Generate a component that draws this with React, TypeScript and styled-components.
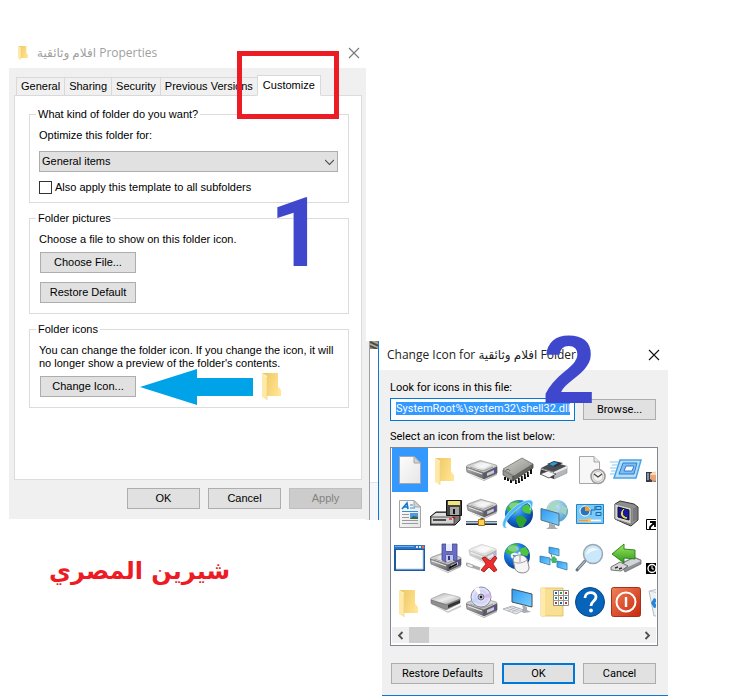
import React, { useLayoutEffect, useRef, useState } from "react";
import styled, { createGlobalStyle, css } from "styled-components";

const sansUi = `"Liberation Sans", "DejaVu Sans", sans-serif`;
const humanistUi = `"Open Sans", "DejaVu Sans", sans-serif`;
const compactUi = `Roboto, "DejaVu Sans", sans-serif`;

const GlobalStyle = createGlobalStyle`
  * { box-sizing: border-box; }
  body { margin: 0; background: #fff; color: #000; }
  button, input, select { font: inherit; color: inherit; margin: 0; }
  svg { display: block; }
`;

/* ---------- desktop ---------- */

const Desktop = styled.main`
  display: grid;
  grid-template-columns: minmax(0, 357fr) 16px minmax(0, 286fr);
  align-items: start;
  min-height: 100vh;
  padding: 38px 72px 0 9px;
`;

const LeftColumn = styled.div`
  display: flex;
  flex-direction: column;
`;

const Window = styled.section`
  position: relative;
`;

const PropertiesWindow = styled(Window)`
  font: 11px/13px ${sansUi};
`;

const IconWindow = styled(Window)`
  margin-top: 301px;
  border-bottom: 1px solid #0a78d4;
  font: 11px/13px ${compactUi};
`;

const TitleBar = styled.header<{ $inactive?: boolean }>`
  display: flex;
  align-items: center;
  height: ${(p) => (p.$inactive ? 30 : 31)}px;
  padding: ${(p) => (p.$inactive ? "0 6px 0 9px" : "0 8px 0 5px")};
  gap: 9px;
  background: #fff;
  color: ${(p) => (p.$inactive ? "#a0a0a0" : "#222")};
  font: 12px/18px ${humanistUi};
`;

const Title = styled.h1`
  flex: 1;
  margin: 0;
  font: inherit;
  white-space: nowrap;
`;

const CloseButton = styled.button`
  display: grid;
  place-items: center;
  width: 12px;
  height: 12px;
  padding: 0;
  border: 0;
  background: none;
`;

const Body = styled.div`
  padding: 7px 4px 10px 5px;
  background: #f0f0f0;
`;

/* ---------- tabs ---------- */

const TabList = styled.div`
  display: flex;
  align-items: flex-end;
  height: 21px;
  padding-left: 2px;
  margin-bottom: -1px;
  position: relative;
`;

const Tab = styled.button<{ $active?: boolean }>`
  position: relative;
  height: 19px;
  padding: 0 4px;
  border: 1px solid #d9d9d9;
  border-right-width: 0;
  background: #f0f0f0;
  white-space: nowrap;
  ${(p) =>
    p.$active &&
    css`
      height: 21px;
      padding: 0 5px 1px;
      border-right-width: 1px;
      border-bottom-color: #fff;
      background: #fff;
    `}
`;

const TabPage = styled.div`
  display: flex;
  flex-direction: column;
  gap: 9px;
  min-height: 385px;
  padding: 12px 12px 0 14px;
  border: 1px solid #dcdcdc;
  background: #fff;
`;

const Group = styled.fieldset<{ $end: number }>`
  position: relative;
  min-width: 0;
  margin: 0;
  padding: 8px 10px ${(p) => p.$end}px 9px;
  border: 1px solid #dcdcdc;
`;

const Legend = styled.legend`
  margin-left: -3px;
  padding: 0 2px;
`;

const Stack = styled.div<{ $gap: number }>`
  display: flex;
  flex-direction: column;
  align-items: flex-start;
  gap: ${(p) => p.$gap}px;
`;

const Copy = styled.p`
  margin: 0;
  white-space: nowrap;
`;

const SelectBox = styled.div`
  position: relative;
  width: 100%;
  svg {
    position: absolute;
    right: 4px;
    top: 7px;
    pointer-events: none;
  }
`;

const Select = styled.select`
  display: block;
  appearance: none;
  width: 100%;
  height: 21px;
  padding: 0 2px;
  border: 1px solid #adadad;
  border-radius: 0;
  background: #e1e1e1;
`;

const CheckLabel = styled.label`
  display: flex;
  align-items: center;
  gap: 3px;
`;

const CheckBox = styled.input`
  appearance: none;
  width: 13px;
  height: 13px;
  border: 1px solid #333;
  background: #fff;
  &:checked {
    box-shadow: inset 0 0 0 2px #fff;
    background: #333;
  }
`;

const PushButton = styled.button<{ $width: number; $primary?: boolean }>`
  width: ${(p) => p.$width}px;
  height: 21px;
  padding: 0;
  border: ${(p) => (p.$primary ? "2px solid #0078d7" : "1px solid #adadad")};
  background: #e1e1e1;
  white-space: nowrap;
  &:disabled {
    border-color: #bfbfbf;
    background: #ccc;
    color: #838383;
  }
`;

const PreviewRow = styled.div`
  display: flex;
  align-items: center;
  gap: 4px;
  height: 21px;
  padding-left: 1px;
`;

const ButtonStack = styled(Stack)`
  padding-left: 1px;
`;

const FolderPreview = styled.span`
  margin-left: 5px;
`;

const Footer = styled.footer`
  display: flex;
  justify-content: flex-end;
  gap: 8px;
  padding-top: 8px;
`;

/* ---------- annotations ---------- */

const TabHighlight = styled.span`
  position: absolute;
  top: -25px;
  left: -21px;
  width: 102px;
  height: 68px;
  border: 5px solid #ed1c24;
  pointer-events: none;
  z-index: 2;
`;

const StepNumber = styled.strong<{ $top: number; $left: string; $face: string }>`
  position: absolute;
  top: ${(p) => p.$top}px;
  left: ${(p) => p.$left};
  color: #3f48cc;
  font: bold 96px/96px ${(p) => p.$face};
  pointer-events: none;
  z-index: 3;
`;

const Signature = styled.p`
  margin: 32px 0 0 40px;
  color: #ed1c24;
  font: bold 24px/40px "DejaVu Sans", sans-serif;
  text-align: left;
  white-space: nowrap;
`;

/* ---------- sliver of the window behind ---------- */

const BackSliver = styled.div`
  display: flex;
  height: 179px;
  margin-top: 303px;
`;

const SliverEdge = styled.div`
  width: 4px;
  border-right: 1px solid #a0a0a0;
  background: #f0f0f0;
`;

const SliverContent = styled.div`
  display: flex;
  flex-direction: column;
  flex: 1;
  min-width: 0;
  overflow: hidden;
`;

const SliverBlank = styled.div`
  flex: 1;
  background: #fff;
`;

const SliverStatus = styled.div`
  height: 38px;
  border-top: 1px solid #dfe3ea;
  background: #f5f7fa;
`;

const SliverFrame = styled.div`
  width: 4px;
  padding-top: 29px;
  border-left: 1px solid #0a78d4;
  background: #f0f0f0;
  background-clip: content-box;
`;

/* ---------- change icon window ---------- */

const IconBody = styled.div`
  display: flex;
  flex-direction: column;
  padding: 11px 10px 11px 8px;
  background: #f0f0f0;
`;

const FieldLabel = styled.label`
  padding-bottom: 4px;
`;

const ListLabel = styled.h2`
  margin: 0;
  padding: 9px 0 4px;
  font: inherit;
`;

const PathRow = styled.div`
  display: flex;
  align-items: center;
  gap: 8px;
  padding-right: 2px;
`;

const PathFrame = styled.div`
  display: flex;
  flex: 1;
  align-items: flex-start;
  min-width: 0;
  height: 23px;
  padding: 3px 4px 0 5px;
  border: 1px solid #0078d7;
  background: #fff;
`;

const PathInput = styled.input`
  width: 100%;
  min-width: 0;
  height: 13px;
  padding: 0;
  border: 0;
  outline: 0;
  background: #3399ff;
  color: #fff;
`;

const IconList = styled.div`
  padding: 0 1px 2px;
  border: 1px solid #828790;
  background: #fff;
`;

const IconGrid = styled.div`
  display: grid;
  grid-template-columns: repeat(8, 36px);
  grid-auto-rows: 44px;
  overflow: hidden;
`;

const IconCell = styled.button<{ $selected: boolean }>`
  display: grid;
  place-items: center;
  padding: 0;
  border: 0;
  background: ${(p) => (p.$selected ? "#3399ff" : "transparent")};
`;

const ScrollTrack = styled.div`
  display: flex;
  height: 16px;
  margin-top: 3px;
  background: #f0f0f0;
`;

const ScrollArrow = styled.button`
  display: grid;
  place-items: center;
  width: 17px;
  padding: 0;
  border: 0;
  background: none;
`;

const ScrollThumb = styled.div`
  width: 20px;
  background: #cdcdcd;
`;

const ScrollSpace = styled.div`
  flex: 1;
`;

const IconFooter = styled.footer`
  display: flex;
  gap: 8px;
  padding: 17px 2px 0 1px;
`;

const FooterSpace = styled.span`
  flex: 1;
  margin-right: -8px;
`;

/* ---------- drawings ---------- */

const Cross = ({ color }: { color: string }) => (
  <svg width="12" height="12" viewBox="0 0 12 12" aria-hidden="true">
    <path d="M1 1l10 10M11 1L1 11" stroke={color} strokeWidth="1.1" />
  </svg>
);

const FolderShape = () => (
  <>
    <path d="M0 0H16V14L18 16V23H5V3Z" fill="url(#folderBack)" />
    <path d="M16 14l3 3v6h-3z" fill="#ffe596" />
    <path d="M0 0l5 4v23L0 24z" fill="#ffe9a8" />
    <path d="M5 4v23" stroke="#f1d27c" strokeWidth=".7" />
  </>
);

const Folder = ({ width, height }: { width: number; height: number }) => (
  <svg width={width} height={height} viewBox="0 0 19 27" preserveAspectRatio="none" aria-hidden="true">
    <FolderShape />
  </svg>
);

const Defs = () => (
  <svg width="0" height="0" aria-hidden="true">
    <defs>
      <linearGradient id="folderBack" x1="0" x2="1" y1="0" y2=".4">
        <stop offset="0" stopColor="#eac561" />
        <stop offset="1" stopColor="#ffe08a" />
      </linearGradient>
      <linearGradient id="paper" x1="0" x2="1" y1="0" y2="1">
        <stop offset="0" stopColor="#fdfdfd" />
        <stop offset="1" stopColor="#e6e6e8" />
      </linearGradient>
      <linearGradient id="metalTop" x1="0" x2="1" y1="0" y2="1">
        <stop offset="0" stopColor="#a9a9a9" />
        <stop offset=".5" stopColor="#ededed" />
        <stop offset="1" stopColor="#9a9a9a" />
      </linearGradient>
      <linearGradient id="metalSide" x1="0" x2="1" y1="0" y2="1">
        <stop offset="0" stopColor="#b4b4b4" />
        <stop offset="1" stopColor="#66666c" />
      </linearGradient>
      <linearGradient id="chipTop" x1="0" x2="1" y1="0" y2="1">
        <stop offset="0" stopColor="#d4d5d0" />
        <stop offset="1" stopColor="#85867f" />
      </linearGradient>
      <radialGradient id="ocean" cx=".38" cy=".3" r=".75">
        <stop offset="0" stopColor="#6cc4ff" />
        <stop offset=".5" stopColor="#1673d8" />
        <stop offset="1" stopColor="#063587" />
      </radialGradient>
      <radialGradient id="paleOcean" cx=".35" cy=".3" r=".8">
        <stop offset="0" stopColor="#d6efff" />
        <stop offset="1" stopColor="#4a9cc9" />
      </radialGradient>
      <linearGradient id="screen" x1="0" x2="1" y1="0" y2="1">
        <stop offset="0" stopColor="#2a9af0" />
        <stop offset="1" stopColor="#7fd0ff" />
      </linearGradient>
      <linearGradient id="greenArrow" x1="0" x2="0" y1="0" y2="1">
        <stop offset="0" stopColor="#a0e860" />
        <stop offset="1" stopColor="#2c9a1c" />
      </linearGradient>
      <linearGradient id="power" x1="0" x2="1" y1="0" y2="1">
        <stop offset="0" stopColor="#f08058" />
        <stop offset="1" stopColor="#c8280c" />
      </linearGradient>
      <radialGradient id="disc">
        <stop offset="0" stopColor="#fff" />
        <stop offset=".6" stopColor="#cfd0f4" />
        <stop offset="1" stopColor="#eef" />
      </radialGradient>
    </defs>
  </svg>
);

const DriveShape = () => (
  <>
    <path d="M2 19l16 7 13-6v-2L18 25z" fill="#000" opacity=".3" />
    <path d="M0 12q0-1 2-2l11-4q1-1 3 0l14 4q1 0 1 2l-13 6z" fill="url(#metalTop)" stroke="#808080" strokeWidth=".6" />
    <path d="M0 12l18 6v6L1 17z" fill="url(#metalSide)" stroke="#666" strokeWidth=".6" />
    <path d="M18 18l13-6v6l-13 6z" fill="#5f5f68" stroke="#44444c" strokeWidth=".6" />
    <path d="M2 14l14 5" stroke="#ececec" strokeWidth="1" />
    <path d="M21 18l7-3v3l-7 3z" fill="#c9c9d6" />
    <path d="M28 15l2-1v3l-2 1z" fill="#5b4bc0" />
    <path d="M7 10l8-3 10 3-7 4z" fill="#fff" opacity=".55" />
    <path d="M4 12l13 4 10-4" stroke="#8f8f8f" strokeWidth=".8" fill="none" />
  </>
);

const GlobeShape = ({ cx = 16, cy = 16, r = 14 }: { cx?: number; cy?: number; r?: number }) => (
  <g transform={`translate(${cx} ${cy}) scale(${r / 14})`}>
    <circle r="14" fill="url(#ocean)" />
    <path d="M-9-10c4-4 9-3 10-2l-3 3 3 3-4 2-1 4-3-2-3 0-3-3z" fill="#3db83a" />
    <path d="M4-8l5-2 4 6-2 4-5-1-3-3z" fill="#4cc63c" />
    <path d="M-2 2l6 0 4 4-4 7-4 0-3-6z" fill="#2fa32f" />
    <ellipse cx="-4" cy="-8" rx="6" ry="3.5" fill="#fff" opacity=".35" />
  </g>
);

const PageShape = () => (
  <>
    <path d="M5.500 2.500H20L26.500 9V29.500H5.500Z" fill="url(#paper)" stroke="#a6a6a6" />
    <path d="M20 2.500V9h6.500z" fill="#d2d2d2" stroke="#a6a6a6" />
  </>
);

type Drawing = { label: string; art: React.ReactNode };

const drawings: Drawing[] = [
  { label: "Document", art: <PageShape /> },
  {
    label: "Folder",
    art: (
      <g transform="translate(5 4)">
        <FolderShape />
      </g>
    ),
  },
  {
    label: "Hard drive",
    art: (
      <g transform="translate(0 1)">
        <DriveShape />
      </g>
    ),
  },
  {
    label: "Memory chip",
    art: (
      <>
        <path d="M3 23v3M6 24v3M9 26v3M14 26v4M17 24v5M20 22v5M23 20v5M26 18v5M29 15v5" stroke="#111" strokeWidth="2" />
        <path d="M1 16l10 6v5L1 21z" fill="#94958f" stroke="#555" strokeWidth=".7" />
        <path d="M11 22L31 10v4L11 27z" fill="#63645e" stroke="#333" strokeWidth=".7" />
        <path d="M1 15L20 4l11 6-19 12z" fill="url(#chipTop)" stroke="#666" strokeWidth=".7" />
        <path d="M4 16q3-2 4 1" fill="none" stroke="#666" />
        <path d="M15 25v4M18 23v4M21 21v4M24 19v4M27 17v4" stroke="#ddd" strokeWidth=".7" />
      </>
    ),
  },
  {
    label: "Printer",
    art: (
      <>
        <path d="M3 14l12-6 14 4-13 6z" fill="#4a4e52" />
        <path d="M16 18l13-6v7l-13 6z" fill="#b4b8bb" stroke="#777" strokeWidth=".5" />
        <path d="M3 14l13 4v7L2 20z" fill="#3b3e42" />
        <path d="M16 18l13-6v2l-13 6z" fill="#ebeced" />
        <path d="M9 10l7-3 9 2-8 4z" fill="#2f3235" />
        <path d="M11 10l5-2 4 1-5 3z" fill="#2d9be4" />
        <path d="M2 20l8-3 8 3-7 4z" fill="#f7f7f7" stroke="#444" strokeWidth=".8" />
        <path d="M3 15l13 4 13-5" stroke="#e6e6e6" strokeWidth=".8" fill="none" />
      </>
    ),
  },
  {
    label: "Recent document",
    art: (
      <>
        <path d="M5.500 2.500H20L25.500 8V29.500H5.500Z" fill="#f7f7f7" stroke="#a8a8a8" />
        <path d="M20 2.500V8h5.500" fill="#e4e4e4" stroke="#a8a8a8" />
        <circle cx="24" cy="22.500" r="7" fill="#f4f2ee" stroke="#9a9a9a" strokeWidth="1.600" />
        <circle cx="24" cy="22.500" r="5" fill="none" stroke="#b5b5b5" strokeWidth=".8" />
        <path d="M20 20l4 3 4-3" fill="none" stroke="#444" strokeWidth="1.200" />
      </>
    ),
  },
  {
    label: "Run",
    art: (
      <>
        <path d="M10 6h21l-5 18H4z" fill="#b9def8" stroke="#4aa3e6" strokeWidth="1.500" />
        <path d="M13 9h14l-3 11H9z" fill="#7dbdf0" stroke="#2c7fd0" />
        <path d="M16 12h8l-2 5h-8z" fill="#f4fbff" stroke="#3c79cc" />
        <path d="M0 8h9M2 11h6M0 14h7M1 17h5M0 20h5" stroke="#8ccaf4" strokeWidth="1.200" />
      </>
    ),
  },
  {
    label: "Shared overlay",
    art: (
      <>
        <path d="M0 18h6v10H0z" fill="#333b4c" />
        <path d="M1 19h2v7H1z" fill="#8992a5" />
        <path d="M4 20c4-3 6-2 10-2v8c-4 1-7 1-10-1z" fill="#e7a77a" />
        <path d="M4 20c3-2 6-2 10-2v3H5z" fill="#fad9bd" />
        <path d="M4 26c4 2 6 1 10 1" stroke="#74401f" fill="none" />
      </>
    ),
  },
  {
    label: "Text document",
    art: (
      <>
        <PageShape />
        <path d="M8 11l5-6 1 6M10 9h4" stroke="#1576cc" strokeWidth="1.600" fill="none" />
        <path d="M16 7h3M16 10h5M8 13.500h16" stroke="#2a8fdc" strokeWidth="1" />
        <path d="M8 16.500h7M8 19.500h7M8 22.500h16M8 25.500h16" stroke="#999" strokeWidth="1" />
        <path d="M16 15h8v6h-8z" fill="#4e9be0" />
        <path d="M16 21l3-3 5 1v2z" fill="#356a50" />
      </>
    ),
  },
  {
    label: "Floppy drive",
    art: (
      <>
        <path d="M0 19l6-5h24v8l-5 5H0z" fill="#777" stroke="#111" />
        <path d="M1 19l5-4h20l-3 4z" fill="#dedede" />
        <path d="M1 19h23v7H1z" fill="#d2d2d2" stroke="#333" strokeWidth=".8" />
        <path d="M3 22h13" stroke="#222" strokeWidth="1.500" />
        <path d="M19 21h3" stroke="#e03030" strokeWidth="1.500" />
        <path d="M16.500 2.500h15v15h-15z" fill="#444" stroke="#111" />
        <path d="M18 3h12v4H18z" fill="#f2e37a" />
        <path d="M20 9h9v8h-9z" fill="#a6a6a6" />
        <path d="M24 11v5" stroke="#111" strokeWidth="2" />
        <path d="M22 19h3v2" stroke="#d33" />
      </>
    ),
  },
  {
    label: "Network drive",
    art: (
      <>
        <g transform="translate(1 -4) scale(.96 .96)">
          <DriveShape />
        </g>
        <path d="M16 20v5" stroke="#555" strokeWidth="3" />
        <path d="M0 25h31" stroke="#223" strokeWidth="4" />
        <path d="M0 24.500h31" stroke="#a9c8dc" strokeWidth="2" />
        <path d="M12.500 21.500h6v6h-6z" fill="#ffd25c" stroke="#b37400" />
      </>
    ),
  },
  {
    label: "Internet",
    art: (
      <>
        <GlobeShape cx={17} cy={16} r={14} />
        <path d="M5 30C-2 31 0 21 8 13S27 0 30 3c2 2 0 6-2 9 1-4 1-6-1-7-3-1-10 4-16 10S1 28 5 30z" fill="#4db8f4" stroke="#c6ecff" strokeWidth=".6" />
      </>
    ),
  },
  {
    label: "Network computer",
    art: (
      <>
        <circle cx="19" cy="13" r="11" fill="url(#paleOcean)" />
        <path d="M12 6c4-4 8-3 10-2l-4 4 2 4-6 2-4-3zM24 7l5 3-1 7-5-3z" fill="#a5d6bd" opacity=".9" />
        <path d="M3 10.500l18 5v12L3 22z" fill="url(#screen)" stroke="#56717f" />
        <path d="M11 25l6 2v2l3 2H8l3-2z" fill="#a4abb1" />
      </>
    ),
  },
  {
    label: "Control panel",
    art: (
      <>
        <path d="M2.500 6.500h27v19h-27z" fill="#7cc8f6" stroke="#2187c9" />
        <circle cx="11" cy="13" r="5" fill="#2574bd" stroke="#fff" />
        <path d="M11 13V8a5 5 0 015 5z" fill="#f39b2c" />
        <path d="M17 17v-5h4v-4M22 8.500h5v3h-5zM22 14.500h5v3h-5z" fill="none" stroke="#136bab" />
        <path d="M5 22.500h22" stroke="#fff" strokeWidth="1.800" />
        <path d="M5 22.500h9" stroke="#f39b2c" strokeWidth="1.800" />
        <path d="M14 20.500h3v4h-3z" fill="#ffc25e" />
      </>
    ),
  },
  {
    label: "Screen saver",
    art: (
      <>
        <path d="M5 6l5-3 14 3 4 3v13l-7 6-5-2L5 21z" fill="#8f8f8f" stroke="#333" />
        <path d="M5 6l16 4v16L5 21z" fill="#d7d7d7" stroke="#777" strokeWidth=".7" />
        <path d="M8 9l11 3v10L8 19z" fill="#1418a4" stroke="#111" />
        <path d="M14 11c-3 3-2 8 3 9-5 1-8-5-3-9z" fill="#ffe930" stroke="#ffe930" />
        <path d="M24 10v13M26 9v13" stroke="#666" />
      </>
    ),
  },
  {
    label: "Shortcut overlay",
    art: (
      <>
        <path d="M.5 21.500h12v10H.5z" fill="#fff" stroke="#000" />
        <path d="M4 24h5v5M9 24l-5 5v2" fill="none" stroke="#000" strokeWidth="1.800" />
      </>
    ),
  },
  {
    label: "Program window",
    art: (
      <>
        <path d="M0 3h31v26H0z" fill="#1c5a9e" />
        <path d="M0 3h31v4H0z" fill="#2a73c8" />
        <path d="M2 8h27v19H2z" fill="#fff" />
        <path d="M1 4.500h19" stroke="#6faced" strokeWidth="1" />
        <path d="M22 5h2M25 5h2" stroke="#d6e8fb" strokeWidth="2" />
        <path d="M28 5h2" stroke="#f26a3c" strokeWidth="2.500" />
        <path d="M29 8v19H2" stroke="#b5d4f0" fill="none" />
      </>
    ),
  },
  {
    label: "Save to drive",
    art: (
      <>
        <g transform="translate(0 5)">
          <DriveShape />
        </g>
        <path d="M12 2h4v7h6V2h5v17l-4-1v-5h-7v7l-4-2z" fill="#6a6dc4" stroke="#45488f" strokeWidth=".8" />
        <path d="M16 2h6v7h-6z" fill="#e9ebff" />
        <path d="M16 13h7v6h-7z" fill="#bfc3ef" />
        <path d="M18 14h2v4h-2z" fill="#34367c" />
        <path d="M19 25l8-4v2l-8 4z" fill="#111" />
      </>
    ),
  },
  {
    label: "Disconnected network drive",
    art: (
      <>
        <g transform="translate(3 -3) scale(.88 .96)" opacity=".45">
          <DriveShape />
        </g>
        <path d="M0 22l14 5" stroke="#aaa" strokeWidth="3" />
        <path d="M1 21l6 2v3l-6-2z" fill="#eee" stroke="#999" strokeWidth=".7" />
        <path d="M16 16l3-1 5 4 5-5 2 2-4 6 4 6-3 2-5-5-5 5-3-2 5-6z" fill="#ee2e2e" stroke="#9c1414" strokeWidth=".8" />
      </>
    ),
  },
  {
    label: "Internet mouse",
    art: (
      <>
        <GlobeShape cx={15} cy={14} r={13} />
        <path d="M14 16c-6 0-5-5-1-4s6 1 4-2" stroke="#f8f8f8" strokeWidth="2" fill="none" />
        <path d="M11 18c0-6 11-7 14-1l2 8c1 7-11 8-14 2z" fill="#f5f5f5" stroke="#8a8a8a" />
        <path d="M12 20c4 2 9 1 13-2M18 14v6" stroke="#9f9f9f" fill="none" />
      </>
    ),
  },
  {
    label: "Network",
    art: (
      <>
        <path d="M12 9l3 9M6 17l9 1 9 4" stroke="#777" strokeWidth="1" fill="none" />
        <path d="M13 17l3-3 3 3-1 4h-4z" fill="#3fb867" />
        <g fill="url(#screen)" stroke="#317ca8" strokeWidth=".8">
          <path d="M11 5l10 2v7l-10-3z" />
          <path d="M2 14l10 2v7L2 20z" />
          <path d="M19 19l10 2v7l-10-3z" />
        </g>
      </>
    ),
  },
  {
    label: "Search",
    art: (
      <>
        <path d="M11 19L3 28" stroke="#65727c" strokeWidth="3" strokeLinecap="round" />
        <path d="M11 19l-7 8" stroke="#b1bac2" strokeWidth="1.200" />
        <circle cx="19" cy="12" r="9.500" fill="#c9e8fb" stroke="#9ca7b0" strokeWidth="1.500" />
        <path d="M12 13c1-7 7-9 13-5-5 0-10 2-13 5z" fill="#fff" opacity=".75" />
      </>
    ),
  },
  {
    label: "Eject device",
    art: (
      <>
        <path d="M10 22l14-7 7 3v4l-16 8z" fill="#8d9298" stroke="#555" strokeWidth=".6" />
        <path d="M12 22l12-6 7 3-13 6z" fill="#d3d6d8" />
        <path d="M1 25l9-5 8 4-7 5-10-1z" fill="#d8d8d8" stroke="#555" strokeWidth=".8" />
        <path d="M5 26l3-1M9 27l3-1" stroke="#333" strokeWidth="1.500" />
        <path d="M2 12L14 2v5l11 1v9l-11-1v5z" fill="url(#greenArrow)" stroke="#2b7a1a" strokeWidth=".9" />
      </>
    ),
  },
  {
    label: "Offline overlay",
    art: (
      <>
        <path d="M0 21h13v11H0z" fill="#000" />
        <circle cx="6" cy="26.500" r="4" fill="none" stroke="#fff" strokeWidth="1.400" />
        <path d="M6 24v3h2" stroke="#fff" fill="none" />
      </>
    ),
  },
  {
    label: "Open folder",
    art: (
      <g transform="translate(5 4)">
        <FolderShape />
      </g>
    ),
  },
  {
    label: "Removable drive",
    art: (
      <>
        <path d="M4 20l14 5 13-6v2l-13 6z" fill="#000" opacity=".2" />
        <path d="M1 14q-1-1 2-2l9-4q2-1 5 0l12 3q3 1 0 3l-11 4q-2 1-4 0z" fill="url(#metalTop)" stroke="#999" strokeWidth=".6" />
        <path d="M1 14l13 4q2 1 4 0l12-5v4l-12 6q-2 1-4 0L2 18q-1 0-1-2z" fill="#8f8f8f" stroke="#666" strokeWidth=".6" />
        <path d="M18 19l12-5v3l-12 5z" fill="#333" />
      </>
    ),
  },
  {
    label: "Optical drive",
    art: (
      <>
        <g transform="translate(0 6)">
          <DriveShape />
        </g>
        <circle cx="15" cy="11" r="10" fill="url(#disc)" stroke="#8a8a9c" />
        <path d="M15 11L8 3a10 10 0 015-2z" fill="#fff" />
        <path d="M15 11l9-4a10 10 0 011 5z" fill="#d5b8f2" />
        <path d="M15 11l-7 7a10 10 0 01-2-5z" fill="#bfd9fa" />
        <circle cx="15" cy="11" r="3" fill="#b9b9ce" stroke="#76768e" />
        <circle cx="15" cy="11" r="1.200" fill="#111" />
      </>
    ),
  },
  {
    label: "Computer",
    art: (
      <>
        <path d="M10 3l20 5v13l-20-5z" fill="url(#screen)" stroke="#444f58" />
        <path d="M20 19l5 2v3l4 2-7 1-4-2 3-2z" fill="#a7adb2" />
        <path d="M1 23l9-3 12 4-8 4z" fill="#eceef0" stroke="#939ba2" strokeWidth=".7" />
        <path d="M4 22l12 4M7 21l12 4M6 25l8-4M10 26l8-4" stroke="#aab0b6" strokeWidth=".7" />
      </>
    ),
  },
  {
    label: "Program group",
    art: (
      <>
        <path d="M3 2h22v28H3z" fill="#f8df92" stroke="#e0bb55" strokeWidth=".8" />
        <path d="M3 2h4v28H3z" fill="#ffe9ad" />
        <path d="M15.500 4.500h15v15h-15z" fill="#fff" stroke="#8c8c8c" />
        <path d="M20.500 4.500v15M25.500 4.500v15M15.500 9.500h15M15.500 14.500h15" stroke="#999" />
        <path d="M17 6h2v2h-2zM27 11h2v2h-2zM22 16h2v2h-2z" fill="#245ea8" />
        <path d="M22 6h2v2h-2zM17 11h2v2h-2z" fill="#319447" />
        <path d="M27 6h2v2h-2zM22 11h2v2h-2zM17 16h2v2h-2zM27 16h2v2h-2z" fill="#b23c2c" />
      </>
    ),
  },
  {
    label: "Help",
    art: (
      <>
        <circle cx="16" cy="16" r="14.500" fill="#0764b8" stroke="#05488a" />
        <path d="M11 12c0-7 11-7 11-1 0 4-5 4-5 9" fill="none" stroke="#fff" strokeWidth="2.800" />
        <circle cx="17" cy="24.500" r="1.900" fill="#fff" />
      </>
    ),
  },
  {
    label: "Shut down",
    art: (
      <>
        <rect x="1.500" y="1.500" width="29" height="29" rx="2" fill="url(#power)" stroke="#a5321c" />
        <circle cx="16" cy="16" r="9.500" fill="none" stroke="#fff" strokeWidth="2" />
        <path d="M16 11v10" stroke="#fff" strokeWidth="2.400" />
      </>
    ),
  },
  {
    label: "Recycle bin",
    art: (
      <>
        <path d="M3 5l14-3 12 3-3 24-18 1z" fill="#eef2f5" stroke="#b4bec6" />
        <path d="M3 5l14 3 12-3" fill="none" stroke="#c5cdd3" />
        <path d="M8 12l4 2-3 3 3 4-4 1-3-5z" fill="#2486d9" />
      </>
    ),
  },
];

const IconArt = ({ children }: { children: React.ReactNode }) => (
  <svg width="32" height="32" viewBox="0 0 32 32" aria-hidden="true">
    {children}
  </svg>
);

const CalloutArrow = () => (
  <svg width="113" height="36" viewBox="0 0 113 36" aria-hidden="true">
    <path d="M0 18L57 0V9H113V27H57V36Z" fill="#00a2e8" />
  </svg>
);

const Chevron = ({ d, size, width }: { d: string; size: number; width: number }) => (
  <svg width={size} height={size} viewBox="0 0 9 9" aria-hidden="true">
    <path d={d} fill="none" stroke="#505050" strokeWidth={width} />
  </svg>
);

const SliverPhoto = () => (
  <svg width="9" height="8" viewBox="0 0 9 8" aria-hidden="true">
    <path d="M0 0h9v8H0z" fill="#8d8578" />
    <path d="M0 1l9 4M0 5l7 3" stroke="#4a453e" strokeWidth="1.500" />
    <path d="M3 0l6 3M0 3l9 4" stroke="#bdb5a6" />
  </svg>
);

/* ---------- page ---------- */

const tabs = ["General", "Sharing", "Security", "Previous Versions", "Customize"];

export default function App() {
  const pathRef = useRef<HTMLInputElement>(null);
  const [path, setPath] = useState("%SystemRoot%\\system32\\shell32.dll");
  const [tab, setTab] = useState("Customize");
  const [selected, setSelected] = useState("Document");

  useLayoutEffect(() => {
    const field = pathRef.current;
    if (field) field.scrollLeft = field.scrollWidth;
  }, []);

  return (
    <>
      <GlobalStyle />
      <Desktop>
        <LeftColumn>
          <PropertiesWindow aria-label="Properties">
            <TitleBar $inactive>
              <Folder width={10} height={14} />
              <Title>افلام وثائقية Properties</Title>
              <CloseButton aria-label="Close">
                <Cross color="#777" />
              </CloseButton>
            </TitleBar>
            <Body>
              <TabList role="tablist">
                {tabs.map((name) => (
                  <Tab key={name} role="tab" aria-selected={tab === name} $active={tab === name} onClick={() => setTab(name)}>
                    {name}
                    {name === "Customize" && <TabHighlight />}
                  </Tab>
                ))}
              </TabList>
              <TabPage role="tabpanel">
                <Group $end={8}>
                  <Legend>What kind of folder do you want?</Legend>
                  <Stack $gap={9}>
                    <label htmlFor="template">Optimize this folder for:</label>
                    <SelectBox>
                      <Select id="template" defaultValue="General items">
                        <option>General items</option>
                      </Select>
                      <Chevron d="M0 2l4.500 4.500L9 2" size={9} width={1.1} />
                    </SelectBox>
                    <CheckLabel>
                      <CheckBox type="checkbox" />
                      Also apply this template to all subfolders
                    </CheckLabel>
                  </Stack>
                </Group>
                <Group $end={10}>
                  <Legend>Folder pictures</Legend>
                  <Stack $gap={6}>
                    <Copy>Choose a file to show on this folder icon.</Copy>
                    <ButtonStack $gap={9}>
                      <PushButton $width={96}>Choose File...</PushButton>
                      <PushButton $width={96}>Restore Default</PushButton>
                    </ButtonStack>
                  </Stack>
                </Group>
                <Group $end={10}>
                  <Legend>Folder icons</Legend>
                  <Stack $gap={6}>
                    <Copy>
                      You can change the folder icon. If you change the icon, it will
                      <br />
                      no longer show a preview of the folder's contents.
                    </Copy>
                    <PreviewRow>
                      <PushButton $width={96}>Change Icon...</PushButton>
                      <CalloutArrow />
                      <FolderPreview>
                        <Folder width={19} height={27} />
                      </FolderPreview>
                    </PreviewRow>
                  </Stack>
                </Group>
              </TabPage>
              <Footer>
                <PushButton $width={73}>OK</PushButton>
                <PushButton $width={73}>Cancel</PushButton>
                <PushButton $width={73} disabled>
                  Apply
                </PushButton>
              </Footer>
            </Body>
            <StepNumber $top={147} $left="73%" $face={compactUi}>
              1
            </StepNumber>
          </PropertiesWindow>
          <Signature dir="rtl" lang="ar">
            شيرين المصري
          </Signature>
        </LeftColumn>

        <BackSliver aria-hidden="true">
          <SliverEdge />
          <SliverContent>
            <SliverPhoto />
            <SliverBlank />
            <SliverStatus />
          </SliverContent>
          <SliverFrame />
        </BackSliver>

        <IconWindow aria-label="Change Icon">
          <TitleBar>
            <Title>Change Icon for افلام وثائقية Folder</Title>
            <CloseButton aria-label="Close">
              <Cross color="#111" />
            </CloseButton>
          </TitleBar>
          <IconBody>
            <FieldLabel htmlFor="path">Look for icons in this file:</FieldLabel>
            <PathRow>
              <PathFrame>
                <PathInput id="path" ref={pathRef} value={path} onChange={(e) => setPath(e.target.value)} />
              </PathFrame>
              <PushButton $width={73}>Browse...</PushButton>
            </PathRow>
            <ListLabel>Select an icon from the list below:</ListLabel>
            <IconList>
              <IconGrid>
                {drawings.map(({ label, art }) => (
                  <IconCell
                    key={label}
                    aria-label={label}
                    aria-pressed={selected === label}
                    $selected={selected === label}
                    onClick={() => setSelected(label)}
                  >
                    <IconArt>{art}</IconArt>
                  </IconCell>
                ))}
              </IconGrid>
              <ScrollTrack>
                <ScrollArrow aria-label="Scroll left">
                  <Chevron d="M6.500 1L3 4.500 6.500 8" size={9} width={1.8} />
                </ScrollArrow>
                <ScrollThumb />
                <ScrollSpace />
                <ScrollArrow aria-label="Scroll right">
                  <Chevron d="M2.500 1L6 4.500 2.500 8" size={9} width={1.8} />
                </ScrollArrow>
              </ScrollTrack>
            </IconList>
            <IconFooter>
              <PushButton $width={103}>Restore Defaults</PushButton>
              <FooterSpace />
              <PushButton $width={73} $primary>
                OK
              </PushButton>
              <PushButton $width={73}>Cancel</PushButton>
            </IconFooter>
          </IconBody>
          <StepNumber $top={-17} $left="56%" $face={sansUi}>
            2
          </StepNumber>
        </IconWindow>
      </Desktop>
      <Defs />
    </>
  );
}
